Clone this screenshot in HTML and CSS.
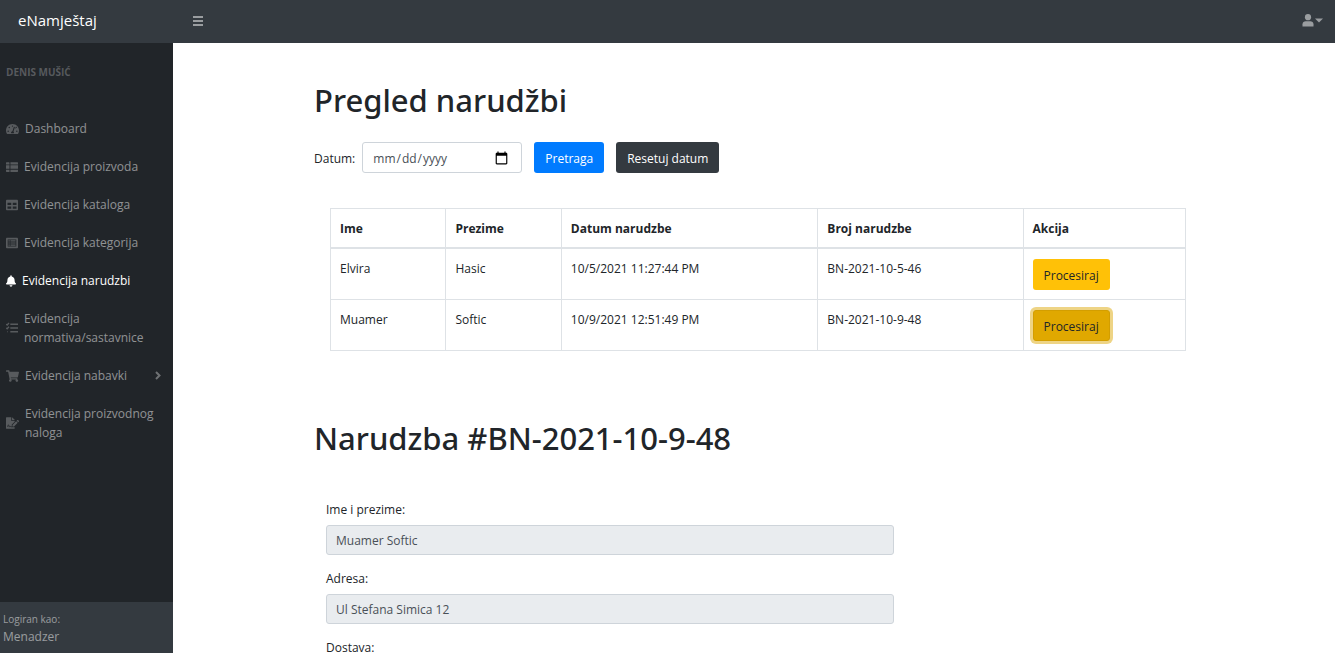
FILE: index.html
```html
<!DOCTYPE html>
<html lang="bs">
<head>
<meta charset="utf-8">
<meta name="viewport" content="width=device-width, initial-scale=1">
<title>eNamještaj</title>
<link rel="stylesheet" href="styles.css">
</head>
<body>
<header class="topbar">
  <a class="brand" href="#">eNamještaj</a>
  <button class="icon-button" type="button" aria-label="Meni">
    <svg class="icon-menu" viewBox="0 0 10 10"><path d="M0 1h10M0 5h10M0 9h10"/></svg>
  </button>
  <button class="icon-button user-menu" type="button" aria-label="Korisnik">
    <svg class="icon-user" viewBox="0 0 12 13"><circle cx="6" cy="3.2" r="3.1"/><path d="M.5 12.5v-2.3C.5 8.400 2 7.200 3.700 7.200h4.600c1.700 0 3.200 1.200 3.200 3v2.300z"/></svg>
    <svg class="icon-caret" viewBox="0 0 8 5"><path d="M0 .5h8L4 4.500z"/></svg>
  </button>
</header>
<div class="layout">
  <aside class="sidebar">
    <div class="sidebar-heading">Denis Mušić</div>
    <nav class="menu">
      <a class="menu-link" href="#">
        <svg class="icon-wide" viewBox="0 0 576 512"><path d="M288 32C129 32 0 161 0 320c0 53 14 102 39 145 6 9 16 15 27 15h444c11 0 21-6 27-15 25-43 39-92 39-145C576 161 447 32 288 32zm0 64c15 0 27 11 31 24l-10 28c-5 7-12 12-21 12a32 32 0 0 1 0-64zM96 384a32 32 0 1 1 0-64 32 32 0 0 1 0 64zm48-160a32 32 0 1 1 0-64 32 32 0 0 1 0 64zm247-40-61 184c13 12 22 28 22 48 0 12-3 23-9 32H233c-6-9-9-20-9-32 0-34 28-62 61-64l61-183c10-30 55-15 45 15zm15 57 22-66c21-32 68-4 48 28-15 25-50 29-70 38zm74 143a32 32 0 1 1 0-64 32 32 0 0 1 0 64z"/></svg>
        <span>Dashboard</span>
      </a>
      <a class="menu-link" href="#">
        <svg class="icon-square" viewBox="0 0 512 512"><path d="M24 48h101a24 24 0 0 1 24 24v72H0V72a24 24 0 0 1 24-24zM0 184h149v144H0zM0 368h149v96H24a24 24 0 0 1-24-24zM189 48h299a24 24 0 0 1 24 24v72H189zM189 184h323v144H189zM189 368h323v72a24 24 0 0 1-24 24H189z"/></svg>
        <span>Evidencija proizvoda</span>
      </a>
      <a class="menu-link" href="#">
        <svg class="icon-square" viewBox="0 0 512 512"><path fill-rule="evenodd" d="M464 32H48C22 32 0 54 0 80v352c0 26 22 48 48 48h416c26 0 48-22 48-48V80c0-26-22-48-48-48zM224 416H64v-96h160zm0-160H64v-96h160zm224 160H288v-96h160zm0-160H288v-96h160z"/></svg>
        <span>Evidencija kataloga</span>
      </a>
      <a class="menu-link" href="#">
        <svg class="icon-square" viewBox="0 0 512 512"><path fill-rule="evenodd" d="M464 32H48C22 32 0 54 0 80v352c0 26 22 48 48 48h416c26 0 48-22 48-48V80c0-26-22-48-48-48zM72 104h368v304H72zM104 140h56v48h-56zM192 140h216v48H192zM104 232h56v48h-56zM192 232h216v48H192zM104 324h56v48h-56zM192 324h216v48H192z"/></svg>
        <span>Evidencija kategorija</span>
      </a>
      <a class="menu-link active" href="#">
        <svg class="icon-narrow" viewBox="0 0 448 512"><path d="M224 512c35 0 64-29 64-64H160c0 35 29 64 64 64zm215-150c-19-20-55-51-55-154 0-77-54-139-128-155V32a32 32 0 1 0-64 0v21C118 69 64 131 64 208c0 103-36 134-55 154-6 7-9 14-9 22 0 16 13 32 32 32h384c19 0 32-16 32-32 0-8-3-15-9-22z"/></svg>
        <span>Evidencija narudzbi</span>
      </a>
      <a class="menu-link" href="#">
        <svg class="icon-square icon-lines" viewBox="0 0 512 512"><path d="M184 96h328M184 256h328M184 416h328M10 90l38 38 80-88M10 250l38 38 80-88"/><circle cx="64" cy="416" r="22"/></svg>
        <span>Evidencija normativa/sastavnice</span>
      </a>
      <a class="menu-link" href="#">
        <svg class="icon-wide" viewBox="0 0 576 512"><path d="m528 301 47-208c4-15-8-29-23-29H159l-9-45c-2-11-12-19-23-19H24C11 0 0 11 0 24v16c0 13 11 24 24 24h70l70 343a56 56 0 1 0 67 9h210a56 56 0 1 0 64-10l5-25c4-15-8-29-23-29H218l-6-32h293c11 0 21-8 23-19z"/></svg>
        <span>Evidencija nabavki</span>
        <svg class="icon-chevron" viewBox="0 0 6 9"><path d="M1 1l3.500 3.500L1 8"/></svg>
      </a>
      <a class="menu-link" href="#">
        <svg class="icon-wide" viewBox="0 0 576 512"><path d="M24 0h200v136c0 13 11 24 24 24h136v40L256 326v90h-38c-14 0-18-29-35-40-15-10-26-2-32 12l-11 28-25-78c-5-16-27-16-32 0l-18 54c-3 8-9 12-17 12v24c14 0 30-7 38-28l13-40 24 72c5 16 25 16 31 2l17-36c9 12 18 42 47 42h166v48c0 13-11 24-24 24H24c-13 0-24-11-24-24V24C0 11 11 0 24 0zm232 0h6c6 0 13 3 17 7l98 98c4 4 7 11 7 17v6H256zm32 340 162-162 68 68-162 162h-68zm280-144-28 28-68-68 28-28c10-10 26-10 36 0l32 32c10 10 10 26 0 36z"/></svg>
        <span>Evidencija proizvodnog naloga</span>
      </a>
    </nav>
    <div class="sidebar-footer">
      <div class="footer-label">Logiran kao:</div>
      <div>Menadzer</div>
    </div>
  </aside>
  <main class="content">
    <div class="container">
      <h1 class="title">Pregled narudžbi</h1>
      <form class="filter">
        <label for="datum">Datum:</label>
        <input class="field date" type="date" id="datum">
        <button class="button primary" type="button">Pretraga</button>
        <button class="button dark" type="button">Resetuj datum</button>
      </form>
      <table class="orders">
        <colgroup><col class="col-name"><col class="col-name"><col class="col-date"><col class="col-number"><col></colgroup>
        <thead>
          <tr><th>Ime</th><th>Prezime</th><th>Datum narudzbe</th><th>Broj narudzbe</th><th>Akcija</th></tr>
        </thead>
        <tbody>
          <tr><td>Elvira</td><td>Hasic</td><td>10/5/2021 11:27:44 PM</td><td>BN-2021-10-5-46</td><td><button class="button warning" type="button">Procesiraj</button></td></tr>
          <tr><td>Muamer</td><td>Softic</td><td>10/9/2021 12:51:49 PM</td><td>BN-2021-10-9-48</td><td><button class="button warning pressed" type="button">Procesiraj</button></td></tr>
        </tbody>
      </table>
      <h2 class="title">Narudzba #BN-2021-10-9-48</h2>
      <form class="details">
        <div class="group">
          <label for="ime">Ime i prezime:</label>
          <input class="field" id="ime" type="text" value="Muamer Softic" readonly>
        </div>
        <div class="group">
          <label for="adresa">Adresa:</label>
          <input class="field" id="adresa" type="text" value="Ul Stefana Simica 12" readonly>
        </div>
        <div class="group">
          <label for="dostava">Dostava:</label>
          <input class="field" id="dostava" type="text" readonly>
        </div>
      </form>
    </div>
  </main>
</div>
</body>
</html>
```
FILE: styles.css
```css
* { box-sizing: border-box; }

body {
  margin: 0;
  height: 100vh;
  display: flex;
  flex-direction: column;
  overflow: hidden;
  background: #fff;
  color: #212529;
  font-family: "Segoe UI", "Open Sans", "Noto Sans", sans-serif;
  font-size: 12px;
  line-height: 19px;
}

button, input { font: inherit; }

svg { flex: none; fill: currentColor; }

.topbar {
  flex: none;
  display: flex;
  align-items: center;
  height: 43px;
  padding: 0 12px 2px 18px;
  background: #343a40;
}

.brand {
  width: 175px;
  color: #fff;
  font-size: 15px;
  text-decoration: none;
}

.icon-button {
  display: flex;
  align-items: center;
  gap: 1px;
  padding: 0;
  border: 0;
  background: none;
  color: rgba(255, 255, 255, 0.5);
}

.icon-menu {
  width: 10px;
  height: 10px;
  stroke: currentColor;
  stroke-width: 2;
}

.user-menu { margin-left: auto; }
.icon-user { width: 12px; height: 13px; }
.icon-caret { width: 8px; height: 5px; }

.layout {
  flex: 1;
  display: flex;
  min-height: 0;
}

.sidebar {
  flex: none;
  display: flex;
  flex-direction: column;
  width: 173px;
  background: #212529;
  color: rgba(255, 255, 255, 0.5);
}

.sidebar-heading {
  padding: 20px 6px 27px;
  color: rgba(255, 255, 255, 0.25);
  font-size: 10px;
  font-weight: 700;
  text-transform: uppercase;
}

.menu { flex: 1; }

.menu-link {
  display: flex;
  align-items: center;
  gap: 6px;
  padding: 10px 12px 9px 6px;
  color: inherit;
  text-decoration: none;
}

.menu-link svg { color: rgba(255, 255, 255, 0.25); }
.menu-link.active, .menu-link.active svg { color: #fff; }

.icon-wide { width: 13px; height: 12px; }
.icon-square { width: 12px; height: 12px; }
.icon-narrow { width: 10px; height: 12px; }

.icon-lines path {
  fill: none;
  stroke: currentColor;
  stroke-width: 56;
}

.icon-chevron {
  width: 6px;
  height: 9px;
  margin-left: auto;
}

.icon-chevron path {
  fill: none;
  stroke: rgba(255, 255, 255, 0.35);
  stroke-width: 2;
}

.sidebar-footer {
  padding: 9px 3px 7px;
  background: #343a40;
}

.footer-label { font-size: 10px; line-height: 16px; }

.content {
  flex: 1;
  overflow: auto;
  scrollbar-width: none;
}

.container {
  max-width: 880px;
  margin: 0 auto;
  padding: 38px 0;
}

.title {
  margin: 0;
  font-family: "Segoe UI", "Noto Sans", "Open Sans", sans-serif;
  font-size: 31px;
  font-weight: 500;
  line-height: 38px;
}

.filter {
  display: flex;
  align-items: center;
  margin: 23px 0 35px;
}

.filter label { padding-top: 2px; }

.field {
  width: 100%;
  height: 30px;
  padding: 5px 9px 4px;
  border: 1px solid #ced4da;
  border-radius: 3px;
  background: #fff;
  color: #495057;
}

.field:read-only { background: #e9ecef; }

.date, .date:read-only {
  width: 160px;
  height: 31px;
  margin: 0 12px 0 7px;
  padding-right: 12px;
  background: #fff;
}

.date::-webkit-calendar-picker-indicator {
  width: 15px;
  height: 15px;
  padding: 0;
}

.button {
  height: 31px;
  padding: 2px 10px 0;
  border: 1px solid transparent;
  border-radius: 3px;
}

.button + .button { margin-left: 12px; }
.primary { background: #007bff; color: #fff; }
.dark { background: #343a40; color: #fff; }
.warning { background: #ffc107; color: #212529; }

.pressed {
  border-color: #d39e00;
  background: #e0a800;
  box-shadow: 0 0 0 3px rgba(222, 170, 12, 0.5);
}

.orders {
  width: calc(100% - 24px);
  margin: 0 8px 68px 16px;
  table-layout: fixed;
  border-collapse: collapse;
}

.col-name { width: 13.5%; }
.col-date { width: 30%; }
.col-number { width: 24%; }

.orders th, .orders td {
  padding: 10px 9px 9px;
  border: 1px solid #dee2e6;
  text-align: left;
  vertical-align: top;
}

.orders thead th { border-bottom-width: 2px; }
.orders .button { display: block; }

.details {
  width: calc(200% / 3 - 19px);
  margin: 43px 0 0 12px;
}

.group { margin-bottom: 14px; }

.group label {
  display: block;
  margin-bottom: 6px;
}

.group .field { display: block; }
```
